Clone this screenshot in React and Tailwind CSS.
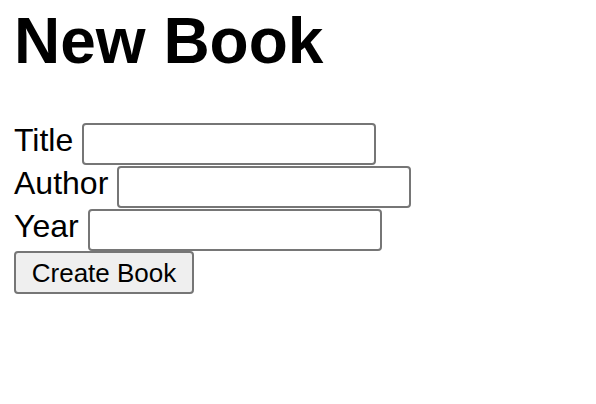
export default function App() {
  const fields = ["Title", "Author", "Year"];

  return (
    <div className="min-h-[404px] bg-white pl-[14px] text-black font-['Liberation_Sans',Arial,sans-serif]">
      <h1 className="pt-[5px] text-[64px] font-bold leading-[72px]">New Book</h1>

      <form className="mt-[45px] flex flex-col items-start">
        {fields.map((label) => (
          <div key={label} className="flex h-[43px] items-start">
            <label className="text-[32px] leading-[37px]">{label}</label>
            <input
              type="text"
              className="ml-[9px] mt-[1px] h-[42px] w-[294px] rounded-[4px] border-2 border-[#767676] bg-white px-1"
            />
          </div>
        ))}
        <button
          type="button"
          className="h-[43px] w-[180px] rounded-[4px] border-2 border-[#767676] bg-[#efefef] text-[26px] leading-none"
        >
          Create Book
        </button>
      </form>
    </div>
  );
}
